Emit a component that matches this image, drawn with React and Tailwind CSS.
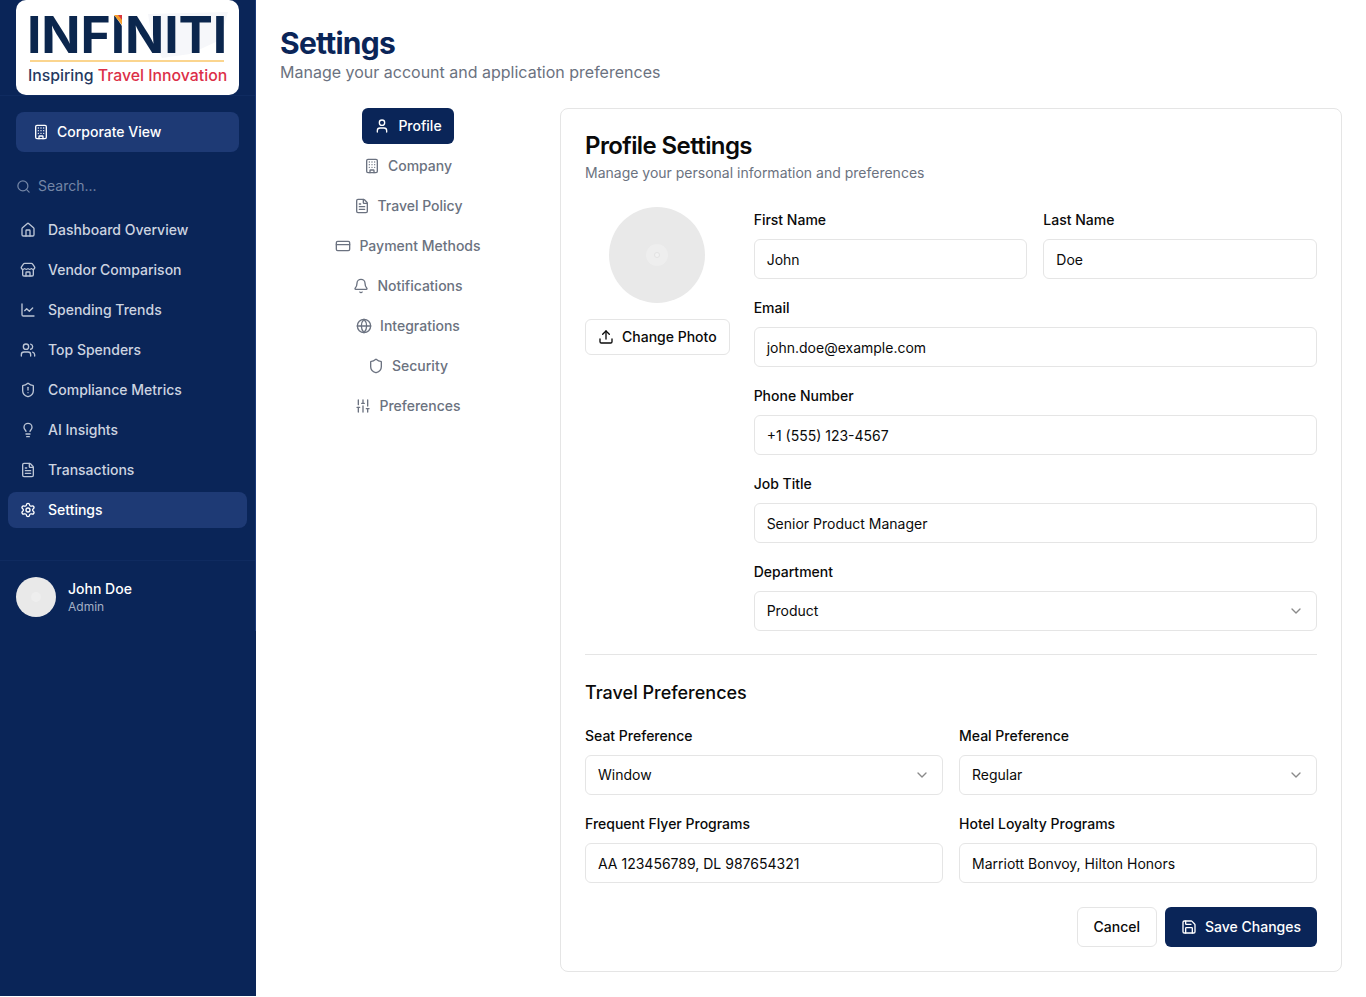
import React from "react";
import { Building, House, Store, ChartLine, Users, ShieldAlert, Lightbulb, FileText, Settings, User, CreditCard, Bell, Globe, Shield, SlidersVertical, Upload, Save, ChevronDown, Search } from "lucide-react";

const nav = [
  [House, "Dashboard Overview"],
  [Store, "Vendor Comparison"],
  [ChartLine, "Spending Trends"],
  [Users, "Top Spenders"],
  [ShieldAlert, "Compliance Metrics"],
  [Lightbulb, "AI Insights"],
  [FileText, "Transactions"],
];
const tabs = [
  [Building, "Company"],
  [FileText, "Travel Policy"],
  [CreditCard, "Payment Methods"],
  [Bell, "Notifications"],
  [Globe, "Integrations"],
  [Shield, "Security"],
  [SlidersVertical, "Preferences"],
];

function Logo() {
  return (
    <div className="relative h-[95px] rounded-[10px] bg-white overflow-hidden">
      <svg className="absolute left-[124px] top-[10px]" width="90" height="60" viewBox="0 0 90 60" aria-hidden="true">
        <path d="M8 4 L88 2 L80 30 L50 44 L22 48 L12 28 Z" fill="#f6f7fa" />
      </svg>
      <div className="absolute left-[11px] top-[7px] whitespace-nowrap font-bold text-[51.5px] leading-[54px] tracking-[-0.1px] text-[#0b264d]">INFINITI</div>
      <svg className="absolute left-[97px] top-[13px]" width="12" height="13" viewBox="0 0 12 13" aria-hidden="true">
        <path d="M0 0 H12 V13 H9 Z" fill="#ffffff" />
        <path d="M1 2 L9 2 L9 12 Z" fill="#f59e2c" />
        <path d="M5 2 L9 2 L9 7 Z" fill="#d9363e" />
      </svg>
      <div className="absolute left-[14px] top-[60px] w-[194px] h-[2px] bg-[#fbd58e]" />
      <div className="absolute left-[12px] top-[66px] whitespace-nowrap text-[15.8px] leading-[20px] font-medium">
        <span className="text-[#25395f]">Inspiring </span>
        <span className="text-[#dc2f48]">Travel Innovation</span>
      </div>
    </div>
  );
}

function Sidebar() {
  return (
    <aside className="w-64 shrink-0 bg-[#0a2558] min-h-[996px]">
      <div className="h-[631px] border-r border-[#1c3a78] flex flex-col">
        <div className="px-4 h-[96px] border-b border-[#0f2b60]">
          <Logo />
        </div>
        <div className="px-4 pt-4">
          <div className="h-10 rounded-lg bg-[#1e3a75] pl-[17px] pr-4 flex items-center gap-2 text-white text-sm font-medium">
            <Building size={16} strokeWidth={2} />
            <span>Corporate View</span>
          </div>
        </div>
        <div className="pl-4 pt-6 h-[60px] flex items-start text-sm text-[#7486a6]">
          <div className="h-[20px] flex items-center gap-[7px]">
            <Search size={15} strokeWidth={2} />
            <span>Search...</span>
          </div>
        </div>
        <nav className="px-2 flex flex-col gap-1">
          {nav.map(([Icon, label]) => (
            <div key={label} className="h-9 px-3 rounded-lg flex items-center gap-3 text-sm font-medium text-[#cdd4e0]">
              <Icon size={16} strokeWidth={2} className="text-[#bcc5d5]" />
              <span>{label}</span>
            </div>
          ))}
          <div className="h-9 px-3 rounded-lg flex items-center gap-3 text-sm font-medium text-white bg-[#1e3a75]">
            <Settings size={16} strokeWidth={2} />
            <span>Settings</span>
          </div>
        </nav>
        <div className="mt-[32px] border-t border-[#0f2b60] px-4 pt-4 flex items-center gap-3">
          <div className="relative w-10 h-10 rounded-full bg-[#e9e9e9] flex items-center justify-center">
            <div className="w-[10px] h-[10px] rounded-full bg-[#eeeeee]" />
          </div>
          <div>
            <div className="text-sm font-medium leading-5 text-white">John Doe</div>
            <div className="text-xs leading-4 text-[#a4b0c6]">Admin</div>
          </div>
        </div>
      </div>
    </aside>
  );
}

function Label({ children }) {
  return <div className="h-[26px] leading-[26px] mb-[6px] text-sm font-medium text-[#0a0a0a]">{children}</div>;
}

function Field({ label, value, select }) {
  return (
    <div className="min-w-0">
      <Label>{label}</Label>
      {select ? (
        <div className="h-10 rounded-md border border-[#e5e5e5] bg-white px-3 flex items-center justify-between text-sm text-[#0a0a0a]">
          <span>{value}</span>
          <ChevronDown size={16} strokeWidth={2} className="text-[#8a8a8a]" />
        </div>
      ) : (
        <div className="h-10 rounded-md border border-[#e5e5e5] bg-white px-3 pt-[2px] flex items-center text-sm text-[#0a0a0a]">
          <span>{value}</span>
        </div>
      )}
    </div>
  );
}

export default function App() {
  return (
    <div className="flex min-h-[997px] bg-white font-['Inter',sans-serif] items-start">
      <Sidebar />
      <main className="flex-1 min-w-0 px-6 pt-6">
        <h1 className="text-3xl leading-9 pt-[1px] font-bold tracking-tight text-[#0a2558]">Settings</h1>
        <p className="text-base leading-6 -mt-[1px] text-[#6b7280]">Manage your account and application preferences</p>
        <div className="mt-6 flex gap-6">
          <div className="w-64 shrink-0 flex flex-col items-center gap-1">
            <div className="h-9 px-3 rounded-md bg-[#0a2558] text-white flex items-center gap-2 text-sm font-medium">
              <User size={16} strokeWidth={2} />
              <span>Profile</span>
            </div>
            {tabs.map(([Icon, label]) => (
              <div key={label} className="h-9 px-3 flex items-center gap-2 text-sm font-medium text-[#6b7280]">
                <Icon size={16} strokeWidth={2} />
                <span>{label}</span>
              </div>
            ))}
          </div>
          <section className="flex-1 min-w-0 rounded-lg border border-[#e5e5e5] bg-white p-6">
            <h2 className="text-2xl leading-8 -mt-[3px] font-semibold tracking-tight text-[#0a0a0a]">Profile Settings</h2>
            <p className="text-sm leading-5 mt-[1px] text-[#6b7280]">Manage your personal information and preferences</p>
            <div className="mt-[24px] flex gap-6">
              <div className="shrink-0 flex flex-col items-center gap-4">
                <div className="w-24 h-24 rounded-full bg-[#e9e9e9] flex items-center justify-center">
                  <div className="w-[22px] h-[22px] rounded-full bg-[#eeeeee] flex items-center justify-center">
                    <div className="w-[6px] h-[6px] rounded-full border border-[#e2e2e2] bg-[#f2f2f2]" />
                  </div>
                </div>
                <div className="h-9 px-3 rounded-md border border-[#e5e5e5] bg-white flex items-center gap-2 text-sm font-medium text-[#0a0a0a]">
                  <Upload size={16} strokeWidth={2} />
                  <span>Change Photo</span>
                </div>
              </div>
              <div className="flex-1 min-w-0 flex flex-col gap-4">
                <div className="grid grid-cols-2 gap-4">
                  <Field label="First Name" value="John" />
                  <Field label="Last Name" value="Doe" />
                </div>
                <Field label="Email" value="john.doe@example.com" />
                <Field label="Phone Number" value="+1 (555) 123-4567" />
                <Field label="Job Title" value="Senior Product Manager" />
                <Field label="Department" value="Product" select />
              </div>
            </div>
            <div className="mt-[23px] border-t border-[#e5e5e5]" />
            <h3 className="mt-6 text-lg leading-7 font-medium text-[#0a0a0a]">Travel Preferences</h3>
            <div className="mt-[16px] grid grid-cols-2 gap-x-4 gap-y-4">
              <Field label="Seat Preference" value="Window" select />
              <Field label="Meal Preference" value="Regular" select />
              <Field label="Frequent Flyer Programs" value="AA 123456789, DL 987654321" />
              <Field label="Hotel Loyalty Programs" value="Marriott Bonvoy, Hilton Honors" />
            </div>
            <div className="mt-6 flex justify-end gap-2">
              <div className="h-10 px-4 rounded-md border border-[#e5e5e5] bg-white flex items-center text-sm font-medium text-[#0a0a0a]">Cancel</div>
              <div className="h-10 px-4 rounded-md bg-[#0a2558] text-white flex items-center gap-2 text-sm font-medium">
                <Save size={16} strokeWidth={2} />
                <span>Save Changes</span>
              </div>
            </div>
          </section>
        </div>
      </main>
    </div>
  );
}
